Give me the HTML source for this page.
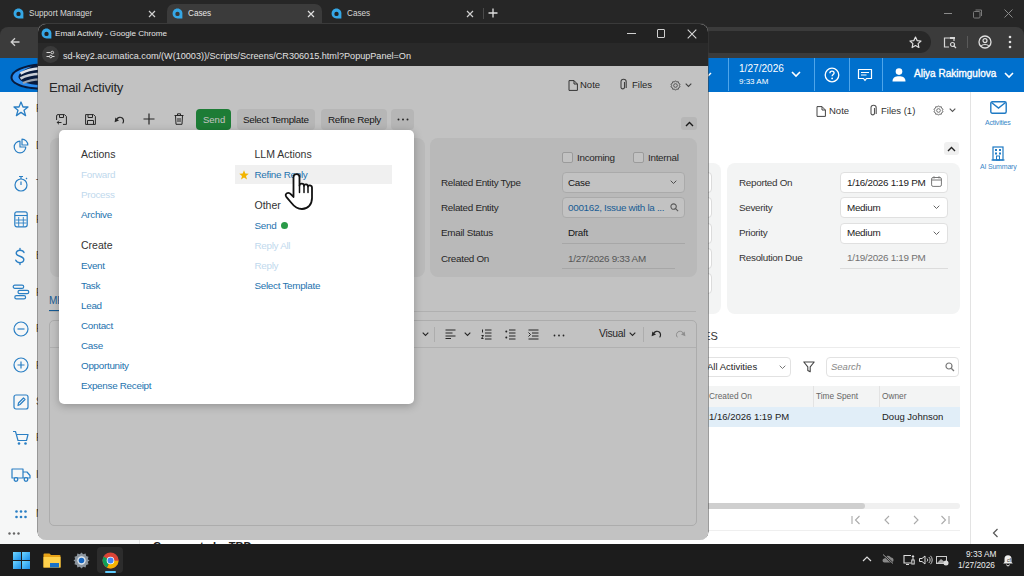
<!DOCTYPE html>
<html><head><meta charset="utf-8">
<style>
*{box-sizing:border-box;margin:0;padding:0}
html,body{width:1024px;height:576px;overflow:hidden;background:#fff;font-family:"Liberation Sans",sans-serif;}
.a{position:absolute}
.t{position:absolute;white-space:nowrap;line-height:1}
svg{position:absolute;overflow:visible}
</style></head><body>
<!-- ===== MAIN CHROME WINDOW ===== -->
<div class="a" style="left:0;top:0;width:1024px;height:58px;background:#262626"></div>
<!-- tabs -->
<div class="a" style="left:167px;top:4px;width:155px;height:24px;background:#3b3b3b;border-radius:7px 7px 0 0"></div>
<div class="a" style="left:0;top:27px;width:1024px;height:31px;background:#3b3b3b;border-radius:8px 8px 0 0"></div>
<div class="a" style="left:700px;top:31px;width:231px;height:22px;background:#282828;border-radius:11px"></div>


<!-- tab content -->
<svg style="left:13px;top:8px" width="11" height="11" viewBox="0 0 11 11"><path d="M5.5 0.6 C8.4 0.6 10.4 3 10.4 5.6 L10.4 10.4 L5.5 10.4 C2.6 10.4 0.6 8.2 0.6 5.5 C0.6 2.8 2.6 0.6 5.5 0.6Z" fill="#35a7e6"/><circle cx="5.5" cy="5.9" r="2.2" fill="#222"/></svg>
<div class="t" style="left:29px;top:10px;font-size:8.2px;color:#d8d8d8">Support Manager</div>
<svg style="left:148px;top:10px" width="8" height="8"><path d="M1 1L7 7M7 1L1 7" stroke="#d0d0d0" stroke-width="1.2"/></svg>
<svg style="left:172px;top:8px" width="11" height="11" viewBox="0 0 11 11"><path d="M5.5 0.6 C8.4 0.6 10.4 3 10.4 5.6 L10.4 10.4 L5.5 10.4 C2.6 10.4 0.6 8.2 0.6 5.5 C0.6 2.8 2.6 0.6 5.5 0.6Z" fill="#35a7e6"/><circle cx="5.5" cy="5.9" r="2.2" fill="#383838"/></svg>
<div class="t" style="left:188px;top:10px;font-size:8.2px;color:#e8e8e8">Cases</div>
<svg style="left:307px;top:10px" width="8" height="8"><path d="M1 1L7 7M7 1L1 7" stroke="#e0e0e0" stroke-width="1.2"/></svg>
<svg style="left:331px;top:8px" width="11" height="11" viewBox="0 0 11 11"><path d="M5.5 0.6 C8.4 0.6 10.4 3 10.4 5.6 L10.4 10.4 L5.5 10.4 C2.6 10.4 0.6 8.2 0.6 5.5 C0.6 2.8 2.6 0.6 5.5 0.6Z" fill="#35a7e6"/><circle cx="5.5" cy="5.9" r="2.2" fill="#222"/></svg>
<div class="t" style="left:347px;top:10px;font-size:8.2px;color:#d8d8d8">Cases</div>
<svg style="left:466px;top:10px" width="8" height="8"><path d="M1 1L7 7M7 1L1 7" stroke="#d0d0d0" stroke-width="1.2"/></svg>
<div class="a" style="left:483px;top:8px;width:1px;height:11px;background:#4a4a4a"></div>
<svg style="left:488px;top:8px" width="10" height="10"><path d="M5 0.5V9.5M0.5 5H9.5" stroke="#e0e0e0" stroke-width="1.3"/></svg>
<!-- window controls -->
<div class="a" style="left:944px;top:13px;width:8px;height:1px;background:#8a8a8a"></div>
<svg style="left:973px;top:9px" width="10" height="10"><rect x="0.5" y="2.5" width="6.5" height="6.5" rx="1" fill="none" stroke="#7a7a7a" stroke-width="1"/><path d="M2.5 1H8.5V7" fill="none" stroke="#7a7a7a" stroke-width="1"/></svg>
<svg style="left:1004px;top:9px" width="9" height="9"><path d="M0.5 0.5L8.5 8.5M8.5 0.5L0.5 8.5" stroke="#8a8a8a" stroke-width="1"/></svg>
<!-- toolbar left back arrow -->
<svg style="left:10px;top:37px" width="10" height="10"><path d="M9.5 5H1.2M5 1.2L1.2 5L5 8.8" fill="none" stroke="#d0d0d0" stroke-width="1.3"/></svg>
<!-- toolbar right -->
<svg style="left:909px;top:36px" width="13" height="13" viewBox="0 0 13 13"><path d="M6.5 1L8.1 4.6L12 5L9.1 7.6L9.9 11.5L6.5 9.5L3.1 11.5L3.9 7.6L1 5L4.9 4.6Z" fill="none" stroke="#e0e0e0" stroke-width="1.2" stroke-linejoin="round"/></svg>
<svg style="left:943px;top:36px" width="14" height="13" viewBox="0 0 14 13"><path d="M6 11H1.5V2H11V5" fill="none" stroke="#d8d8d8" stroke-width="1.2"/><rect x="7" y="1" width="5" height="2" fill="#d8d8d8"/><circle cx="9.5" cy="8.5" r="2" fill="none" stroke="#d8d8d8" stroke-width="1.2"/><path d="M11 10L13 12" stroke="#d8d8d8" stroke-width="1.2"/></svg>
<div class="a" style="left:967px;top:36px;width:1px;height:12px;background:#5a5a5a"></div>
<svg style="left:978px;top:35px" width="14" height="14" viewBox="0 0 14 14"><circle cx="7" cy="7" r="6" fill="none" stroke="#e0e0e0" stroke-width="1.3"/><circle cx="7" cy="5.6" r="2" fill="none" stroke="#e0e0e0" stroke-width="1.2"/><path d="M3.2 11C4.5 9 9.5 9 10.8 11" fill="none" stroke="#e0e0e0" stroke-width="1.2"/></svg>
<svg style="left:1008px;top:35px" width="4" height="14"><circle cx="2" cy="2" r="1.3" fill="#e0e0e0"/><circle cx="2" cy="7" r="1.3" fill="#e0e0e0"/><circle cx="2" cy="12" r="1.3" fill="#e0e0e0"/></svg>

<!-- main page -->
<div id="main" class="a" style="left:0;top:58px;width:1024px;height:486px;background:#fff">
  <div class="a" style="left:0;top:0;width:1024px;height:34px;background:#0070cd"></div>
  <div class="a" style="left:0;top:34px;width:140px;height:452px;background:#f6f7f7;border-right:1px solid #e2e2e2"></div>
  <div class="a" style="left:970px;top:34px;width:1px;height:452px;background:#e3e3e3"></div>
</div>


<!-- header content -->
<svg style="left:0;top:56px" width="40" height="40" viewBox="0 0 40 40">
 <path d="M40 7.5C24 8.5 10.5 14 10.5 21.5C10.5 28.5 24 33.5 40 33.5Z" fill="#071a3d"/>
 <path d="M32 10.5C21 12.5 12.5 16.5 12.5 21.5C12.5 27 25 31.5 40 31.5V29C28 28.5 20 26 18.5 21.5C18 17.5 24 13.5 32 10.5Z" fill="#2a8cef"/>
 <path d="M20.5 17.5C26 14.5 32 13 40 12.3" stroke="#dfe3e8" stroke-width="2.6" fill="none"/>
 <path d="M20.5 22.5C26 19.5 32 18.3 40 17.8" stroke="#c9ced5" stroke-width="2.6" fill="none"/>
 <path d="M23 27C28.5 24.5 33 23.5 40 23.3" stroke="#9ba3ad" stroke-width="2.2" fill="none"/>
</svg>
<div class="a" style="left:728px;top:58px;width:1px;height:33px;background:#4ea5ea"></div>
<div class="a" style="left:814px;top:58px;width:1px;height:33px;background:#4ea5ea"></div>
<div class="a" style="left:849px;top:58px;width:1px;height:33px;background:#4ea5ea"></div>
<div class="a" style="left:882px;top:58px;width:1px;height:33px;background:#4ea5ea"></div>
<svg style="left:708px;top:70px" width="8" height="8"><path d="M0 6L3 3" stroke="#fff" stroke-width="1.5"/></svg>
<div class="t" style="left:739px;top:64px;font-size:10.1px;color:#fff;">1/27/2026</div>
<div class="t" style="left:739px;top:77.7px;font-size:8px;color:#fff;">9:33 AM</div>
<svg style="left:791px;top:71px" width="10" height="7"><path d="M1 1L5 5L9 1" fill="none" stroke="#fff" stroke-width="1.6"/></svg>
<svg style="left:824px;top:67px" width="16" height="16" viewBox="0 0 16 16"><circle cx="8" cy="8" r="6.8" fill="none" stroke="#fff" stroke-width="1.3"/><path d="M5.9 6.2C5.9 4.9 6.9 4.2 8 4.2C9.2 4.2 10.1 5 10.1 6.1C10.1 7.5 8.1 7.6 8.1 9.3" fill="none" stroke="#fff" stroke-width="1.3"/><circle cx="8.1" cy="11.4" r="0.9" fill="#fff"/></svg>
<svg style="left:857px;top:68px" width="16" height="15" viewBox="0 0 16 15"><path d="M1.5 1.5H14.5V10.5H9.5L8 12.5L6.5 10.5H1.5Z" fill="none" stroke="#fff" stroke-width="1.2" stroke-linejoin="round"/><path d="M4 4.5H12M4 7H9.5" stroke="#fff" stroke-width="1.1"/></svg>
<svg style="left:892px;top:68px" width="14" height="14" viewBox="0 0 14 14"><circle cx="7" cy="3.6" r="3.3" fill="#fff"/><path d="M0.5 13.5C0.5 9.5 3.5 8.3 7 8.3C10.5 8.3 13.5 9.5 13.5 13.5Z" fill="#fff"/></svg>
<div class="t" style="left:914px;top:69px;font-size:10px;color:#fff;-webkit-text-stroke:0.35px #fff">Aliya Rakimgulova</div>
<svg style="left:1004px;top:72px" width="10" height="7"><path d="M1 1L5 5L9 1" fill="none" stroke="#fff" stroke-width="1.6"/></svg>

<!-- left sidebar icons -->
<svg style="left:13px;top:101px" width="16" height="16" viewBox="0 0 16 16"><path d="M8 1L10 6H15L11 9.2L12.6 14.6L8 11.4L3.4 14.6L5 9.2L1 6H6Z" fill="none" stroke="#2a7fc4" stroke-width="1.3" stroke-linejoin="round"/></svg>
<svg style="left:13px;top:138px" width="16" height="16" viewBox="0 0 16 16"><path d="M7 3.2A5.8 5.8 0 1 0 12.8 9H7Z" fill="none" stroke="#2a7fc4" stroke-width="1.2" stroke-linejoin="round"/><path d="M9 1.2A5.8 5.8 0 0 1 14.8 7H9Z" fill="none" stroke="#2a7fc4" stroke-width="1.2" stroke-linejoin="round"/></svg>
<svg style="left:13px;top:175px" width="16" height="17" viewBox="0 0 16 17"><circle cx="8" cy="10" r="6" fill="none" stroke="#2a7fc4" stroke-width="1.2"/><path d="M6 1.5H10M8 1.5V4M8 10V6.5M13 4L14 3" stroke="#2a7fc4" stroke-width="1.2"/></svg>
<svg style="left:14px;top:211px" width="14" height="17" viewBox="0 0 14 17"><rect x="0.8" y="0.8" width="12.4" height="15" rx="2" fill="none" stroke="#2a7fc4" stroke-width="1.2"/><path d="M0.8 4.5H13.2" stroke="#2a7fc4" stroke-width="1.1"/><path d="M4.7 6V15.5M9.3 6V15.5M1.5 9H12.5M1.5 12H12.5" stroke="#2a7fc4" stroke-width="0.9"/></svg>
<svg style="left:14px;top:248px" width="12" height="17" viewBox="0 0 12 17"><path d="M10 4.5C9.5 3.2 8 2.3 6 2.3C3.8 2.3 2.2 3.5 2.2 5.2C2.2 9 9.8 7.5 9.8 11.6C9.8 13.4 8.2 14.6 6 14.6C3.8 14.6 2.4 13.6 1.8 12.2M6 0.5V2.3M6 14.6V16.5" fill="none" stroke="#2a7fc4" stroke-width="1.4" stroke-linecap="round"/></svg>
<svg style="left:12px;top:284px" width="18" height="16" viewBox="0 0 18 16"><rect x="1.2" y="1.2" width="10.5" height="3.2" rx="1.6" fill="none" stroke="#2a7fc4" stroke-width="1.2"/><rect x="6" y="6.4" width="10.8" height="3.2" rx="1.6" fill="none" stroke="#2a7fc4" stroke-width="1.2"/><rect x="2.8" y="11.6" width="10.8" height="3.2" rx="1.6" fill="none" stroke="#2a7fc4" stroke-width="1.2"/></svg>
<svg style="left:13px;top:321px" width="16" height="16" viewBox="0 0 16 16"><circle cx="8" cy="8" r="7" fill="none" stroke="#2a7fc4" stroke-width="1.2"/><path d="M4.5 8H11.5" stroke="#2a7fc4" stroke-width="1.2"/></svg>
<svg style="left:13px;top:357px" width="16" height="16" viewBox="0 0 16 16"><circle cx="8" cy="8" r="7" fill="none" stroke="#2a7fc4" stroke-width="1.2"/><path d="M4.5 8H11.5M8 4.5V11.5" stroke="#2a7fc4" stroke-width="1.2"/></svg>
<svg style="left:13px;top:394px" width="16" height="16" viewBox="0 0 16 16"><rect x="1" y="1" width="14" height="14" rx="2" fill="none" stroke="#2a7fc4" stroke-width="1.2"/><path d="M5 11.5L5.5 9L10.5 4L12 5.5L7 10.5Z" fill="none" stroke="#2a7fc4" stroke-width="1.2" stroke-linejoin="round"/></svg>
<svg style="left:12px;top:430px" width="18" height="16" viewBox="0 0 18 16"><path d="M1 1.5H3.5L6 10.5H14.5L16 4.5H5" fill="none" stroke="#2a7fc4" stroke-width="1.2" stroke-linejoin="round"/><circle cx="7" cy="13.5" r="1.3" fill="#2a7fc4"/><circle cx="13.5" cy="13.5" r="1.3" fill="#2a7fc4"/></svg>
<svg style="left:11px;top:467px" width="20" height="15" viewBox="0 0 20 15"><path d="M1 2H12V11H1Z M12 5H16L19 8.5V11H12" fill="none" stroke="#2a7fc4" stroke-width="1.2" stroke-linejoin="round"/><circle cx="5" cy="12.5" r="1.8" fill="#f6f7f7" stroke="#2a7fc4" stroke-width="1.3"/><circle cx="15" cy="12.5" r="1.8" fill="#f6f7f7" stroke="#2a7fc4" stroke-width="1.3"/></svg>
<svg style="left:15px;top:510px" width="12" height="9"><g fill="#2a7fc4"><circle cx="1.5" cy="1.5" r="1.3"/><circle cx="6" cy="1.5" r="1.3"/><circle cx="10.5" cy="1.5" r="1.3"/><circle cx="1.5" cy="7" r="1.3"/><circle cx="6" cy="7" r="1.3"/><circle cx="10.5" cy="7" r="1.3"/></g></svg>
<svg style="left:8px;top:532px" width="12" height="3"><g fill="#666"><circle cx="1.5" cy="1.5" r="1.2"/><circle cx="6" cy="1.5" r="1.2"/><circle cx="10.5" cy="1.5" r="1.2"/></g></svg>


<div class="t" style="left:36px;top:104px;font-size:10px;color:#333">Favorites</div>
<div class="t" style="left:36px;top:141px;font-size:10px;color:#333">Dashboards</div>
<div class="t" style="left:36px;top:179px;font-size:10px;color:#333">Time</div>
<div class="t" style="left:36px;top:215px;font-size:10px;color:#333">Finance</div>
<div class="t" style="left:36px;top:251px;font-size:10px;color:#333">Banking</div>
<div class="t" style="left:36px;top:288px;font-size:10px;color:#333">Projects</div>
<div class="t" style="left:36px;top:324px;font-size:10px;color:#333">Payables</div>
<div class="t" style="left:36px;top:361px;font-size:10px;color:#333">Receivables</div>
<div class="t" style="left:36px;top:397px;font-size:10px;color:#333">Sales Orders</div>
<div class="t" style="left:36px;top:433px;font-size:10px;color:#333">Purchases</div>
<div class="t" style="left:36px;top:470px;font-size:10px;color:#333">Inventory</div>
<div class="t" style="left:36px;top:509px;font-size:10px;color:#333">More Items</div>
<!-- main content right -->
<svg style="left:816px;top:106px" width="10" height="11" viewBox="0 0 10 11"><path d="M1 0.6H6L9.4 4V10.4H1Z M6 0.6V4H9.4" fill="none" stroke="#444" stroke-width="1" stroke-linejoin="round"/></svg>
<div class="t" style="left:829px;top:105.5px;font-size:9.5px;color:#333">Note</div>
<svg style="left:869px;top:105px" width="8" height="12" viewBox="0 0 8 12"><path d="M5.5 3V8.5A1.8 1.8 0 0 1 2 8.5V2.8A2.6 2.6 0 0 1 7.2 2.8V9" fill="none" stroke="#555" stroke-width="1.1"/></svg>
<div class="t" style="left:881px;top:105.5px;font-size:9.5px;color:#333">Files (1)</div>
<svg style="left:933px;top:105px" width="11" height="11" viewBox="0 0 12 12"><circle cx="6" cy="6" r="2" fill="none" stroke="#666" stroke-width="1"/><path d="M6 0.8L7.2 2.2L9 1.8L9.4 3.6L11 4.5L10.2 6L11 7.5L9.4 8.4L9 10.2L7.2 9.8L6 11.2L4.8 9.8L3 10.2L2.6 8.4L1 7.5L1.8 6L1 4.5L2.6 3.6L3 1.8L4.8 2.2Z" fill="none" stroke="#666" stroke-width="1" stroke-linejoin="round"/></svg>
<svg style="left:949px;top:108px" width="7" height="5"><path d="M0.7 0.7L3.5 3.5L6.3 0.7" fill="none" stroke="#555" stroke-width="1.1"/></svg>
<div class="a" style="left:944px;top:142px;width:15px;height:13px;background:#f0f0f0;border-radius:3px"></div>
<svg style="left:947px;top:146px" width="9" height="6"><path d="M1 5L4.5 1.5L8 5" fill="none" stroke="#222" stroke-width="1.4"/></svg>

<!-- panels -->
<div class="a" style="left:690px;top:163px;width:31px;height:151px;background:#f3f4f4;border-radius:8px"></div>
<div class="a" style="left:680px;top:172px;width:32px;height:21px;background:#fff;border:1px solid #dcdcdc;border-radius:4px"></div>
<div class="a" style="left:680px;top:197px;width:32px;height:21px;background:#fff;border:1px solid #dcdcdc;border-radius:4px"></div>
<div class="a" style="left:680px;top:223px;width:32px;height:21px;background:#fff;border:1px solid #dcdcdc;border-radius:4px"></div>
<div class="a" style="left:680px;top:248px;width:32px;height:21px;background:#fff;border:1px solid #dcdcdc;border-radius:4px"></div>
<div class="a" style="left:680px;top:273px;width:32px;height:21px;background:#fff;border:1px solid #dcdcdc;border-radius:4px"></div>
<div class="a" style="left:727px;top:163px;width:233px;height:151px;background:#f3f4f4;border-radius:8px"></div>
<div class="t" style="left:739px;top:177.5px;font-size:9.9px;letter-spacing:-0.3px;color:#333">Reported On</div>
<div class="t" style="left:739px;top:202.5px;font-size:9.9px;letter-spacing:-0.3px;color:#333">Severity</div>
<div class="t" style="left:739px;top:228px;font-size:9.9px;letter-spacing:-0.3px;color:#333">Priority</div>
<div class="t" style="left:739px;top:253px;font-size:9.9px;letter-spacing:-0.3px;color:#333">Resolution Due</div>
<div class="a" style="left:840px;top:172px;width:108px;height:21px;background:#fff;border:1px solid #e0e0e0;border-radius:4px"></div>
<div class="t" style="left:847px;top:177.5px;font-size:9.9px;letter-spacing:-0.3px;color:#222">1/16/2026 1:19 PM</div>
<svg style="left:931px;top:176px" width="11" height="11" viewBox="0 0 11 11"><rect x="0.6" y="1.5" width="9.8" height="8.9" rx="1.5" fill="none" stroke="#777" stroke-width="1"/><path d="M0.6 4H10.4M3 0.3V2.5M8 0.3V2.5" stroke="#777" stroke-width="1"/></svg>
<div class="a" style="left:840px;top:197px;width:108px;height:21px;background:#fff;border:1px solid #e0e0e0;border-radius:4px"></div>
<div class="t" style="left:847px;top:202.5px;font-size:9.9px;letter-spacing:-0.3px;color:#222">Medium</div>
<svg style="left:933px;top:205px" width="7" height="5"><path d="M0.7 0.7L3.5 3.5L6.3 0.7" fill="none" stroke="#666" stroke-width="1"/></svg>
<div class="a" style="left:840px;top:223px;width:108px;height:21px;background:#fff;border:1px solid #e0e0e0;border-radius:4px"></div>
<div class="t" style="left:847px;top:228px;font-size:9.9px;letter-spacing:-0.3px;color:#222">Medium</div>
<svg style="left:933px;top:231px" width="7" height="5"><path d="M0.7 0.7L3.5 3.5L6.3 0.7" fill="none" stroke="#666" stroke-width="1"/></svg>
<div class="t" style="left:847px;top:253px;font-size:9.9px;letter-spacing:-0.3px;color:#727272">1/19/2026 1:19 PM</div>
<div class="a" style="left:840px;top:268px;width:108px;height:1px;background:#dcdcdc"></div>

<!-- activities -->
<div class="t" style="left:658px;top:330.5px;font-size:11px;color:#333">ACTIVITIES</div>
<div class="a" style="left:690px;top:347px;width:270px;height:1px;background:#ececec"></div>
<div class="a" style="left:690px;top:357px;width:101px;height:20px;background:#fff;border:1px solid #e2e2e2;border-radius:4px"></div>
<div class="t" style="left:707px;top:362px;font-size:9.5px;color:#222">All Activities</div>
<svg style="left:779px;top:365px" width="7" height="5"><path d="M0.7 0.7L3.5 3.5L6.3 0.7" fill="none" stroke="#777" stroke-width="1"/></svg>
<svg style="left:803px;top:361px" width="12" height="12" viewBox="0 0 12 12"><path d="M0.8 1H11.2L7.2 5.8V10.8L4.8 9.4V5.8Z" fill="none" stroke="#444" stroke-width="1.1" stroke-linejoin="round"/></svg>
<div class="a" style="left:826px;top:357px;width:133px;height:20px;background:#fff;border:1px solid #e2e2e2;border-radius:4px"></div>
<div class="t" style="left:831px;top:362px;font-size:9.5px;color:#888;font-style:italic">Search</div>
<svg style="left:945px;top:362px" width="10" height="10" viewBox="0 0 10 10"><circle cx="4" cy="4" r="3" fill="none" stroke="#777" stroke-width="1.2"/><path d="M6.2 6.2L9 9" stroke="#777" stroke-width="1.3"/></svg>
<div class="a" style="left:690px;top:386px;width:270px;height:21px;background:#f3f4f4"></div>
<div class="a" style="left:813px;top:386px;width:1px;height:21px;background:#e3e3e3"></div>
<div class="a" style="left:879px;top:386px;width:1px;height:21px;background:#e3e3e3"></div>
<div class="t" style="left:709px;top:392px;font-size:8.3px;color:#666">Created On</div>
<div class="t" style="left:816px;top:392px;font-size:8.3px;color:#666">Time Spent</div>
<div class="t" style="left:882px;top:392px;font-size:8.3px;color:#666">Owner</div>
<div class="a" style="left:690px;top:407px;width:270px;height:20px;background:#e1eef8"></div>
<div class="t" style="left:709px;top:412px;font-size:9.5px;color:#222">1/16/2026 1:19 PM</div>
<div class="t" style="left:882px;top:412px;font-size:9.5px;color:#222">Doug Johnson</div>
<div class="a" style="left:690px;top:503px;width:270px;height:6px;background:#f0f0f0;border-radius:3px"></div>
<div class="a" style="left:690px;top:503px;width:175px;height:6px;background:#cfcfcf;border-radius:3px"></div>
<svg style="left:851px;top:515px" width="10" height="10"><path d="M1 1V9M8.5 1L4.5 5L8.5 9" fill="none" stroke="#aaa" stroke-width="1.1"/></svg>
<svg style="left:883px;top:515px" width="10" height="10"><path d="M6 1L2 5L6 9" fill="none" stroke="#aaa" stroke-width="1.1"/></svg>
<svg style="left:912px;top:515px" width="10" height="10"><path d="M2 1L6 5L2 9" fill="none" stroke="#aaa" stroke-width="1.1"/></svg>
<svg style="left:940px;top:515px" width="10" height="10"><path d="M1.5 1L5.5 5L1.5 9M9 1V9" fill="none" stroke="#aaa" stroke-width="1.1"/></svg>
<div class="a" style="left:690px;top:530px;width:270px;height:1px;background:#efefef"></div>

<!-- right sidebar -->
<svg style="left:990px;top:101px" width="17" height="13" viewBox="0 0 17 13"><rect x="0.8" y="0.8" width="15.4" height="11.4" rx="1.5" fill="none" stroke="#1f7ac4" stroke-width="1.4"/><path d="M1.5 1.5L8.5 7L15.5 1.5" fill="none" stroke="#1f7ac4" stroke-width="1.4"/></svg>
<div class="t" style="left:985px;top:119px;font-size:7px;color:#3a88c8;letter-spacing:-0.2px">Activities</div>
<svg style="left:991px;top:146px" width="14" height="15" viewBox="0 0 14 15"><rect x="2" y="1" width="10" height="13" fill="none" stroke="#1f7ac4" stroke-width="1.2"/><path d="M0.5 14H13.5" stroke="#1f7ac4" stroke-width="1.2"/><g fill="#1f7ac4"><rect x="4" y="3" width="2" height="2"/><rect x="8" y="3" width="2" height="2"/><rect x="4" y="6.5" width="2" height="2"/><rect x="8" y="6.5" width="2" height="2"/></g><rect x="5.5" y="10" width="3" height="4" fill="none" stroke="#1f7ac4" stroke-width="1"/></svg>
<div class="t" style="left:980px;top:163px;font-size:7px;color:#3a88c8;letter-spacing:-0.2px">AI Summary</div>
<svg style="left:992px;top:528px" width="7" height="10"><path d="M5.5 1L1.5 5L5.5 9" fill="none" stroke="#555" stroke-width="1.2"/></svg>

<div class="t" style="left:153px;top:541.3px;font-size:11px;font-weight:bold;color:#222">Comments by TBD</div>
<!-- taskbar -->
<div class="a" style="left:0;top:544px;width:1024px;height:32px;background:#1c1c1c"></div>


<!-- taskbar icons -->
<svg style="left:13px;top:552px" width="17" height="17" viewBox="0 0 17 17"><defs><linearGradient id="wg" x1="0" y1="0" x2="1" y2="1"><stop offset="0" stop-color="#6fd6ff"/><stop offset="1" stop-color="#1a8ee8"/></linearGradient></defs><rect x="0" y="0" width="8" height="8" fill="url(#wg)"/><rect x="9" y="0" width="8" height="8" fill="url(#wg)"/><rect x="0" y="9" width="8" height="8" fill="url(#wg)"/><rect x="9" y="9" width="8" height="8" fill="url(#wg)"/></svg>
<svg style="left:43px;top:553px" width="18" height="15" viewBox="0 0 18 15"><path d="M0.5 1.5A1 1 0 0 1 1.5 0.5H6.5L8 2H16.5A1 1 0 0 1 17.5 3V14.5H0.5Z" fill="#e8a317"/><rect x="0.5" y="4" width="17" height="10.5" fill="#ffd24d"/><rect x="7" y="10" width="9" height="4.5" fill="#1a73c9"/></svg>
<svg style="left:73px;top:552px" width="17" height="17" viewBox="0 0 17 17"><path d="M8.5 0.5L10.2 2.2L12.6 1.6L13.2 4L15.5 4.8L14.8 7.2L16.5 8.5L14.8 9.8L15.5 12.2L13.2 13L12.6 15.4L10.2 14.8L8.5 16.5L6.8 14.8L4.4 15.4L3.8 13L1.5 12.2L2.2 9.8L0.5 8.5L2.2 7.2L1.5 4.8L3.8 4L4.4 1.6L6.8 2.2Z" fill="#8c959e"/><circle cx="8.5" cy="8.5" r="4.2" fill="#dfe6ec"/><circle cx="8.5" cy="8.5" r="2.8" fill="#1565c0"/></svg>
<div class="a" style="left:97px;top:547px;width:26px;height:26px;background:#2c2c2c;border-radius:4px"></div>
<svg style="left:102px;top:552px" width="17" height="17" viewBox="0 0 17 17"><circle cx="8.5" cy="8.5" r="8" fill="#db4437"/><path d="M8.5 8.5L1.6 4.5A8 8 0 0 0 5.1 15.7Z" fill="#0f9d58"/><path d="M8.5 8.5L5.1 15.7A8 8 0 0 0 16.5 8.5Z" fill="#f4b400"/><path d="M8.5 8.5L16.5 8.5A8 8 0 0 0 15.4 4.5Z" fill="#db4437"/><circle cx="8.5" cy="8.5" r="3.8" fill="#fff"/><circle cx="8.5" cy="8.5" r="3" fill="#4285f4"/></svg>
<div class="a" style="left:105px;top:571px;width:11px;height:2px;background:#60cdff;border-radius:1px"></div>
<svg style="left:862px;top:555px" width="10" height="7"><path d="M1 6L5 2L9 6" fill="none" stroke="#ddd" stroke-width="1.2"/></svg>
<svg style="left:882px;top:554px" width="12" height="10" viewBox="0 0 12 10"><path d="M2.5 8.5H9A2.5 2.5 0 0 0 9 3.5A3.5 3.5 0 0 0 2.5 4.5A2 2 0 0 0 2.5 8.5Z" fill="#888"/><path d="M1 0.5L11 9.5" stroke="#1c1c1c" stroke-width="2"/><path d="M1 0.5L11 9.5" stroke="#aaa" stroke-width="0.9"/></svg>
<svg style="left:903px;top:554px" width="12" height="12" viewBox="0 0 12 12"><path d="M8 1.5H1V9H8" fill="none" stroke="#ddd" stroke-width="1.1"/><path d="M3 10.5H6M10 1V6M8.8 2.5H11.2" stroke="#ddd" stroke-width="1"/><rect x="8.8" y="6" width="2.4" height="4" fill="none" stroke="#ddd" stroke-width="1"/></svg>
<svg style="left:919px;top:555px" width="13" height="10" viewBox="0 0 13 10"><path d="M0.5 3.5H3L6 1V9L3 6.5H0.5Z" fill="none" stroke="#ddd" stroke-width="1"/><path d="M8 3.5A2 2 0 0 1 8 6.5M9.8 2A4 4 0 0 1 9.8 8M11.5 0.8A6 6 0 0 1 11.5 9.2" fill="none" stroke="#ddd" stroke-width="0.9"/></svg>
<svg style="left:936px;top:554px" width="13" height="12" viewBox="0 0 13 12"><rect x="0.5" y="2.5" width="10" height="7" fill="none" stroke="#ccc" stroke-width="1"/><path d="M1 9L5 5L10 9Z" fill="#aaa"/><circle cx="10" cy="9" r="2.5" fill="#ddd"/></svg>
<div class="t" style="left:966px;top:550px;font-size:8.3px;color:#eee">9:33 AM</div>
<div class="t" style="left:958px;top:561px;font-size:8.3px;color:#eee">1/27/2026</div>
<svg style="left:1002px;top:554px" width="12" height="12" viewBox="0 0 12 12"><path d="M6 1.2A3.5 3.5 0 0 0 2.5 4.7V8L1.2 9.5H10.8L9.5 8V4.7A3.5 3.5 0 0 0 6 1.2Z" fill="#eee"/><path d="M4.6 10.5A1.4 1.4 0 0 0 7.4 10.5" stroke="#eee" stroke-width="1"/><text x="5" y="8" font-size="5" fill="#1c1c1c" font-family="Liberation Sans">cf</text></svg>

<!-- ===== POPUP WINDOW ===== -->
<div id="pop" class="a" style="left:38px;top:24px;width:670px;height:516px;background:#fff;border-radius:8px;overflow:hidden;box-shadow:0 -0.5px 0 0.5px #3a3a3a">
  <div class="a" style="left:0;top:0;width:670px;height:19px;background:#222"></div>
  <div class="a" style="left:0;top:19px;width:670px;height:23px;background:#292929"></div>
  <svg style="left:3px;top:4px" width="11" height="11" viewBox="0 0 11 11"><path d="M5.5 0.6 C8.4 0.6 10.4 3 10.4 5.6 L10.4 10.4 L5.5 10.4 C2.6 10.4 0.6 8.2 0.6 5.5 C0.6 2.8 2.6 0.6 5.5 0.6Z" fill="#35a7e6"/><circle cx="5.5" cy="5.9" r="2.2" fill="#222"/></svg>
  <div class="t" style="left:17px;top:6.4px;font-size:8.1px;color:#e6e6e6">Email Activity - Google Chrome</div>
  <div class="a" style="left:589px;top:9px;width:9px;height:1px;background:#d0d0d0"></div>
  <div class="a" style="left:619px;top:5px;width:8px;height:9px;border:1px solid #d0d0d0;border-radius:1px"></div>
  <svg style="left:649px;top:5px" width="10" height="10"><path d="M0.7 0.7L9.3 9.3M9.3 0.7L0.7 9.3" stroke="#d8d8d8" stroke-width="1.1"/></svg>
  <div class="a" style="left:4px;top:22px;width:17px;height:17px;border-radius:50%;background:#3a3a3a"></div>
  <svg style="left:8px;top:26px" width="9" height="9" viewBox="0 0 9 9"><path d="M0.5 2.5H4.5M0.5 6.5H3.5M6 6.5H8.5" stroke="#d8d8d8" stroke-width="1"/><circle cx="6.3" cy="2.5" r="1.3" fill="none" stroke="#d8d8d8" stroke-width="1"/><circle cx="4.8" cy="6.5" r="1.3" fill="none" stroke="#d8d8d8" stroke-width="1"/></svg>
  <div class="t" style="left:25px;top:27.5px;font-size:9.1px;color:#e2e2e2">sd-key2.acumatica.com/(W(10003))/Scripts/Screens/CR306015.html?PopupPanel=On</div>

  <div id="pc" class="a" style="left:0;top:42px;width:670px;height:474px;background:#fff"></div>
</div>
<!-- popup content (page coords) -->
<div class="t" style="left:49px;top:81px;font-size:13.2px;letter-spacing:-0.25px;color:#333">Email Activity</div>
<svg style="left:568px;top:80px" width="10" height="11" viewBox="0 0 10 11"><path d="M1 0.6H6L9.4 4V10.4H1Z M6 0.6V4H9.4" fill="none" stroke="#444" stroke-width="1" stroke-linejoin="round"/></svg>
<div class="t" style="left:580px;top:80px;font-size:9.5px;color:#333">Note</div>
<svg style="left:619px;top:79px" width="8" height="12" viewBox="0 0 8 12"><path d="M5.5 3V8.5A1.8 1.8 0 0 1 2 8.5V2.8A2.6 2.6 0 0 1 7.2 2.8V9" fill="none" stroke="#555" stroke-width="1.1"/></svg>
<div class="t" style="left:632px;top:80px;font-size:9.5px;color:#333">Files</div>
<svg style="left:670px;top:80px" width="11" height="11" viewBox="0 0 12 12"><circle cx="6" cy="6" r="2" fill="none" stroke="#666" stroke-width="1"/><path d="M6 0.8L7.2 2.2L9 1.8L9.4 3.6L11 4.5L10.2 6L11 7.5L9.4 8.4L9 10.2L7.2 9.8L6 11.2L4.8 9.8L3 10.2L2.6 8.4L1 7.5L1.8 6L1 4.5L2.6 3.6L3 1.8L4.8 2.2Z" fill="none" stroke="#666" stroke-width="1" stroke-linejoin="round"/></svg>
<svg style="left:685px;top:83px" width="7" height="5"><path d="M0.7 0.7L3.5 3.5L6.3 0.7" fill="none" stroke="#555" stroke-width="1.1"/></svg>
<!-- toolbar icons -->
<svg style="left:56px;top:114px" width="11" height="11" viewBox="0 0 11 11"><path d="M3.5 0.6H8.5L10.4 2.5V10.4H7M0.6 6V2A1.4 1.4 0 0 1 2 0.6H3.5V3.5H7.5V0.6" fill="none" stroke="#333" stroke-width="1" stroke-linejoin="round"/><path d="M5.5 8.5H1.2M3 6.7L1.2 8.5L3 10.3" fill="none" stroke="#333" stroke-width="1"/></svg>
<svg style="left:85px;top:114px" width="11" height="11" viewBox="0 0 11 11"><path d="M0.6 0.6H8.5L10.4 2.5V10.4H0.6Z M3 0.6V3.5H7.5V0.6 M2.5 10.4V6.5H8.5V10.4" fill="none" stroke="#333" stroke-width="1" stroke-linejoin="round"/></svg>
<svg style="left:114px;top:115px" width="12" height="9" viewBox="0 0 12 9"><path d="M8.6 8.3A3.6 3.6 0 1 0 3 3.8" fill="none" stroke="#333" stroke-width="1.2"/><path d="M0.6 7.2L1.4 2.6L5 5.4Z" fill="#333"/></svg>
<svg style="left:143px;top:113px" width="12" height="12"><path d="M6 0.5V11.5M0.5 6H11.5" stroke="#333" stroke-width="1.2"/></svg>
<svg style="left:174px;top:113px" width="10" height="12" viewBox="0 0 10 12"><path d="M0.5 2.5H9.5M3.5 2.5V0.8H6.5V2.5M1.5 2.5L2 11.3H8L8.5 2.5M4 5V9M6 5V9" fill="none" stroke="#333" stroke-width="1"/></svg>
<div class="a" style="left:196px;top:109px;width:35px;height:21px;background:#27a347;border-radius:4px"></div>
<div class="t" style="left:203px;top:114.5px;font-size:9.5px;color:#fff">Send</div>
<div class="a" style="left:237px;top:109px;width:78px;height:21px;background:#f0f0f0;border-radius:4px"></div>
<div class="t" style="left:243px;top:114.5px;font-size:9.9px;letter-spacing:-0.3px;color:#222">Select Template</div>
<div class="a" style="left:321px;top:109px;width:66px;height:21px;background:#f0f0f0;border-radius:4px"></div>
<div class="t" style="left:328px;top:114.5px;font-size:9.9px;letter-spacing:-0.3px;color:#222">Refine Reply</div>
<div class="a" style="left:391px;top:109px;width:23px;height:21px;background:#f0f0f0;border-radius:4px"></div>
<svg style="left:397px;top:118px" width="12" height="3"><g fill="#333"><circle cx="1.5" cy="1.5" r="1"/><circle cx="6" cy="1.5" r="1"/><circle cx="10.5" cy="1.5" r="1"/></g></svg>
<div class="a" style="left:681px;top:117px;width:16px;height:13px;background:#f0f0f0;border-radius:3px"></div>
<svg style="left:685px;top:121px" width="9" height="6"><path d="M1 5L4.5 1.5L8 5" fill="none" stroke="#222" stroke-width="1.4"/></svg>
<!-- form panels -->
<div class="a" style="left:50px;top:138px;width:375px;height:139px;background:#f3f4f4;border-radius:8px"></div>
<div class="a" style="left:430px;top:138px;width:267px;height:139px;background:#f3f4f4;border-radius:8px"></div>
<div class="a" style="left:562px;top:152px;width:11px;height:11px;background:#fff;border:1px solid #ccc;border-radius:2px"></div>
<div class="t" style="left:577px;top:153px;font-size:9.9px;letter-spacing:-0.3px;color:#333">Incoming</div>
<div class="a" style="left:633px;top:152px;width:11px;height:11px;background:#fff;border:1px solid #ccc;border-radius:2px"></div>
<div class="t" style="left:648px;top:153px;font-size:9.9px;letter-spacing:-0.3px;color:#333">Internal</div>
<div class="t" style="left:441px;top:177.5px;font-size:9.9px;letter-spacing:-0.3px;color:#333">Related Entity Type</div>
<div class="t" style="left:441px;top:203px;font-size:9.9px;letter-spacing:-0.3px;color:#333">Related Entity</div>
<div class="t" style="left:441px;top:228px;font-size:9.9px;letter-spacing:-0.3px;color:#333">Email Status</div>
<div class="t" style="left:441px;top:253.5px;font-size:9.9px;letter-spacing:-0.3px;color:#333">Created On</div>
<div class="a" style="left:562px;top:172px;width:123px;height:21px;background:#fff;border:1px solid #e0e0e0;border-radius:4px"></div>
<div class="t" style="left:568px;top:177.5px;font-size:9.9px;letter-spacing:-0.3px;color:#222">Case</div>
<svg style="left:670px;top:180px" width="7" height="5"><path d="M0.7 0.7L3.5 3.5L6.3 0.7" fill="none" stroke="#666" stroke-width="1"/></svg>
<div class="a" style="left:562px;top:197px;width:123px;height:21px;background:#fff;border:1px solid #e0e0e0;border-radius:4px"></div>
<div class="t" style="left:568px;top:203px;font-size:9.9px;letter-spacing:-0.3px;color:#1f7ac4">000162, Issue with la ...</div>
<svg style="left:670px;top:203px" width="9" height="9" viewBox="0 0 10 10"><circle cx="4" cy="4" r="3" fill="none" stroke="#777" stroke-width="1.2"/><path d="M6.2 6.2L9 9" stroke="#777" stroke-width="1.3"/></svg>
<div class="t" style="left:568px;top:228px;font-size:9.9px;letter-spacing:-0.3px;color:#222">Draft</div>
<div class="a" style="left:562px;top:243px;width:123px;height:1px;background:#dcdcdc"></div>
<div class="t" style="left:568px;top:253.5px;font-size:9.9px;letter-spacing:-0.3px;color:#727272">1/27/2026 9:33 AM</div>
<div class="a" style="left:562px;top:268px;width:113px;height:1px;background:#dcdcdc"></div>
<!-- tabs + editor -->
<div class="t" style="left:49px;top:296px;font-size:10px;color:#1f7ac4">MESSAGE</div>
<div class="a" style="left:49px;top:310px;width:50px;height:2px;background:#1f7ac4"></div>
<div class="a" style="left:49px;top:311px;width:647px;height:1px;background:#e8e8e8"></div>
<div class="a" style="left:49px;top:320px;width:648px;height:206px;border:1px solid #e2e2e2;border-radius:5px"></div>
<div class="a" style="left:50px;top:347px;width:646px;height:1px;background:#e8e8e8"></div>
<svg style="left:422px;top:331.8px" width="7" height="5"><path d="M0.7 0.7L3.5 3.5L6.3 0.7" fill="none" stroke="#333" stroke-width="1.1"/></svg>
<div class="a" style="left:434px;top:326.8px;width:1px;height:15px;background:#e4e4e4"></div>
<svg style="left:445px;top:328.8px" width="11" height="10"><path d="M0.5 1H10.5M0.5 4H7.5M0.5 7H10.5M0.5 9.5H6" stroke="#333" stroke-width="1"/></svg>
<svg style="left:464px;top:331.8px" width="7" height="5"><path d="M0.7 0.7L3.5 3.5L6.3 0.7" fill="none" stroke="#333" stroke-width="1.1"/></svg>
<svg style="left:481px;top:328.8px" width="11" height="11"><path d="M4 1H10.5M4 4H10.5M4 7H10.5M4 10H10.5M1.5 0.5V3.5M0.5 6.5H2.5L0.5 9.5H2.5" fill="none" stroke="#333" stroke-width="1"/></svg>
<svg style="left:505px;top:328.8px" width="11" height="11"><path d="M4 1H10.5M4 4H10.5M4 7H10.5M4 10H10.5" stroke="#333" stroke-width="1"/><circle cx="1.3" cy="2.5" r="1" fill="#333"/><circle cx="1.3" cy="8.5" r="1" fill="#333"/></svg>
<svg style="left:528px;top:328.8px" width="11" height="11"><path d="M0.5 1H10.5M4 4H10.5M4 7H10.5M0.5 10H10.5M0.5 3.5L2.5 5.5L0.5 7.5" fill="none" stroke="#333" stroke-width="1"/></svg>
<svg style="left:553px;top:333.8px" width="12" height="3"><g fill="#333"><circle cx="1.5" cy="1.5" r="0.9"/><circle cx="6" cy="1.5" r="0.9"/><circle cx="10.5" cy="1.5" r="0.9"/></g></svg>
<div class="t" style="left:599px;top:328.6px;font-size:10.4px;letter-spacing:-0.3px;color:#333">Visual</div>
<svg style="left:629px;top:332px" width="7" height="5"><path d="M0.7 0.7L3.5 3.5L6.3 0.7" fill="none" stroke="#333" stroke-width="1.1"/></svg>
<div class="a" style="left:643px;top:326.8px;width:1px;height:15px;background:#e4e4e4"></div>
<svg style="left:651px;top:329.3px" width="12" height="9" viewBox="0 0 12 9"><path d="M8.6 8.3A3.6 3.6 0 1 0 3 3.8" fill="none" stroke="#333" stroke-width="1.2"/><path d="M0.6 7.2L1.4 2.6L5 5.4Z" fill="#333"/></svg>
<svg style="left:674px;top:329.3px" width="12" height="9" viewBox="0 0 12 9"><path d="M3.4 8.3A3.6 3.6 0 1 1 9 3.8" fill="none" stroke="#bbb" stroke-width="1"/><path d="M11.4 7.2L10.6 2.6L7 5.4Z" fill="#bbb"/></svg>
<!-- overlay -->
<div class="a" style="left:38px;top:66px;width:670px;height:474px;background:rgba(0,0,0,.24);border-radius:0 0 8px 8px"></div>


<!-- ===== DROPDOWN MENU ===== -->
<div id="menu" class="a" style="left:59px;top:130px;width:355px;height:273.5px;background:#fff;border-radius:5px;box-shadow:0 2px 8px rgba(0,0,0,.25)"></div>
<div class="t" style="left:81px;top:149px;font-size:10.5px;color:#333">Actions</div>
<div class="t" style="left:81px;top:169.7px;font-size:9.9px;letter-spacing:-0.3px;color:#bfd9ed">Forward</div>
<div class="t" style="left:81px;top:189.7px;font-size:9.9px;letter-spacing:-0.3px;color:#bfd9ed">Process</div>
<div class="t" style="left:81px;top:209.7px;font-size:9.9px;letter-spacing:-0.3px;color:#2472ae">Archive</div>
<div class="t" style="left:81px;top:240px;font-size:10.5px;color:#333">Create</div>
<div class="t" style="left:81px;top:260.7px;font-size:9.9px;letter-spacing:-0.3px;color:#2472ae">Event</div>
<div class="t" style="left:81px;top:280.7px;font-size:9.9px;letter-spacing:-0.3px;color:#2472ae">Task</div>
<div class="t" style="left:81px;top:300.7px;font-size:9.9px;letter-spacing:-0.3px;color:#2472ae">Lead</div>
<div class="t" style="left:81px;top:320.7px;font-size:9.9px;letter-spacing:-0.3px;color:#2472ae">Contact</div>
<div class="t" style="left:81px;top:340.7px;font-size:9.9px;letter-spacing:-0.3px;color:#2472ae">Case</div>
<div class="t" style="left:81px;top:360.7px;font-size:9.9px;letter-spacing:-0.3px;color:#2472ae">Opportunity</div>
<div class="t" style="left:81px;top:380.7px;font-size:9.9px;letter-spacing:-0.3px;color:#2472ae">Expense Receipt</div>
<div class="t" style="left:254.5px;top:149px;font-size:10.5px;color:#333">LLM Actions</div>
<div class="a" style="left:235px;top:165px;width:157px;height:19px;background:#f0f0f0"></div>
<svg style="left:239px;top:170px" width="10" height="10" viewBox="0 0 10 10"><path d="M5 0.3L6.3 3.6L9.8 3.7L7 5.9L8 9.4L5 7.4L2 9.4L3 5.9L0.2 3.7L3.7 3.6Z" fill="#f2b400"/></svg>
<div class="t" style="left:254.5px;top:169.7px;font-size:9.9px;letter-spacing:-0.3px;color:#2472ae">Refine Reply</div>
<div class="t" style="left:254.5px;top:200px;font-size:10.5px;color:#333">Other</div>
<div class="t" style="left:254.5px;top:220.7px;font-size:9.9px;letter-spacing:-0.3px;color:#2472ae">Send</div>
<div class="a" style="left:281px;top:222px;width:7px;height:7px;border-radius:50%;background:#2a9a48"></div>
<div class="t" style="left:254.5px;top:240.7px;font-size:9.9px;letter-spacing:-0.3px;color:#bfd9ed">Reply All</div>
<div class="t" style="left:254.5px;top:260.7px;font-size:9.9px;letter-spacing:-0.3px;color:#bfd9ed">Reply</div>
<div class="t" style="left:254.5px;top:280.7px;font-size:9.9px;letter-spacing:-0.3px;color:#2472ae">Select Template</div>
<!-- cursor -->
<svg style="left:280px;top:170px" width="40" height="44" viewBox="0 0 40 44">
<path d="M13.5 26V7.2A3 3 0 0 1 19.5 7.2V15.5C19.5 13 24 13 24 15.8C24.3 13.8 28 13.8 28 16.6C28.3 14.8 32 15 32 17.8V28C32 34.5 28 39 22 39C17.5 39 14.5 37 11.5 33L6.3 26.8C5.3 25.5 5.6 23.8 6.9 23.2C8.2 22.6 9.8 23 11 24.3L13.5 27Z" fill="#fff" stroke="#111" stroke-width="1.8" stroke-linejoin="round"/>
<path d="M19.5 15.5V22.5M24 15.8V22.5M28 16.6V22.5" stroke="#111" stroke-width="1.5" stroke-linecap="round"/>
</svg>


</body></html>
